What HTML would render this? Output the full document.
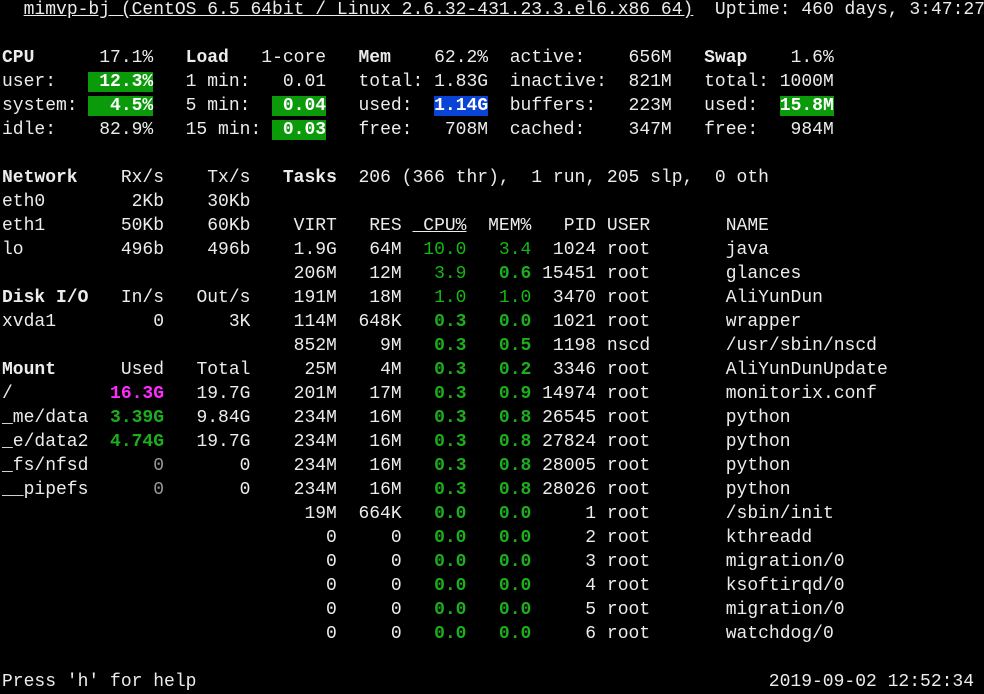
<!DOCTYPE html>
<html><head><meta charset="utf-8">
<style>
html,body{margin:0;padding:0;background:#000;width:984px;height:692px;overflow:hidden}
pre{position:absolute;left:2px;top:-2px;margin:0;font-family:"Liberation Mono",monospace;font-size:18px;line-height:24px;color:#ececec;white-space:pre}
b{font-weight:bold}
.u{text-decoration:underline}
.g{color:#14b814}
.gb{color:#1cae1c;font-weight:bold}
.bg{background:#0a9a0a;color:#fff;font-weight:bold}
.bl{background:#0a44d6;color:#fff;font-weight:bold}
.m{color:#ff2bff;font-weight:bold}
.gr{color:#9a9a9a}
</style></head><body>
<pre>  <span class="u">mimvp-bj (CentOS 6.5 64bit / Linux 2.6.32-431.23.3.el6.x86_64)</span>  Uptime: 460 days, 3:47:27

<b>CPU</b>      17.1%   <b>Load</b>   1-core   <b>Mem</b>    62.2%  active:    656M   <b>Swap</b>    1.6%
user:   <span class="bg"> 12.3%</span>   1 min:   0.01   total: 1.83G  inactive:  821M   total: 1000M
system: <span class="bg">  4.5%</span>   5 min:  <span class="bg"> 0.04</span>   used:  <span class="bl">1.14G</span>  buffers:   223M   used:  <span class="bg">15.8M</span>
idle:    82.9%   15 min: <span class="bg"> 0.03</span>   free:   708M  cached:    347M   free:   984M

<b>Network</b>    Rx/s    Tx/s   <b>Tasks</b>  206 (366 thr),  1 run, 205 slp,  0 oth
eth0        2Kb    30Kb
eth1       50Kb    60Kb    VIRT   RES <span class="u"> CPU%</span>  MEM%   PID USER       NAME
lo         496b    496b    1.9G   64M  <span class="g">10.0</span>   <span class="g">3.4</span>  1024 root       java
                           206M   12M   <span class="g">3.9</span>   <span class="gb">0.6</span> 15451 root       glances
<b>Disk I/O</b>   In/s   Out/s    191M   18M   <span class="g">1.0</span>   <span class="g">1.0</span>  3470 root       AliYunDun
xvda1         0      3K    114M  648K   <span class="gb">0.3</span>   <span class="gb">0.0</span>  1021 root       wrapper
                           852M    9M   <span class="gb">0.3</span>   <span class="gb">0.5</span>  1198 nscd       /usr/sbin/nscd
<b>Mount</b>      Used   Total     25M    4M   <span class="gb">0.3</span>   <span class="gb">0.2</span>  3346 root       AliYunDunUpdate
/         <span class="m">16.3G</span>   19.7G    201M   17M   <span class="gb">0.3</span>   <span class="gb">0.9</span> 14974 root       monitorix.conf
_me/data  <span class="gb">3.39G</span>   9.84G    234M   16M   <span class="gb">0.3</span>   <span class="gb">0.8</span> 26545 root       python
_e/data2  <span class="gb">4.74G</span>   19.7G    234M   16M   <span class="gb">0.3</span>   <span class="gb">0.8</span> 27824 root       python
_fs/nfsd      <span class="gr">0</span>       0    234M   16M   <span class="gb">0.3</span>   <span class="gb">0.8</span> 28005 root       python
__pipefs      <span class="gr">0</span>       0    234M   16M   <span class="gb">0.3</span>   <span class="gb">0.8</span> 28026 root       python
                            19M  664K   <span class="gb">0.0</span>   <span class="gb">0.0</span>     1 root       /sbin/init
                              0     0   <span class="gb">0.0</span>   <span class="gb">0.0</span>     2 root       kthreadd
                              0     0   <span class="gb">0.0</span>   <span class="gb">0.0</span>     3 root       migration/0
                              0     0   <span class="gb">0.0</span>   <span class="gb">0.0</span>     4 root       ksoftirqd/0
                              0     0   <span class="gb">0.0</span>   <span class="gb">0.0</span>     5 root       migration/0
                              0     0   <span class="gb">0.0</span>   <span class="gb">0.0</span>     6 root       watchdog/0

Press 'h' for help</pre>
<pre style="left:768.8px;top:670px">2019-09-02 12:52:34</pre>
</body></html>
